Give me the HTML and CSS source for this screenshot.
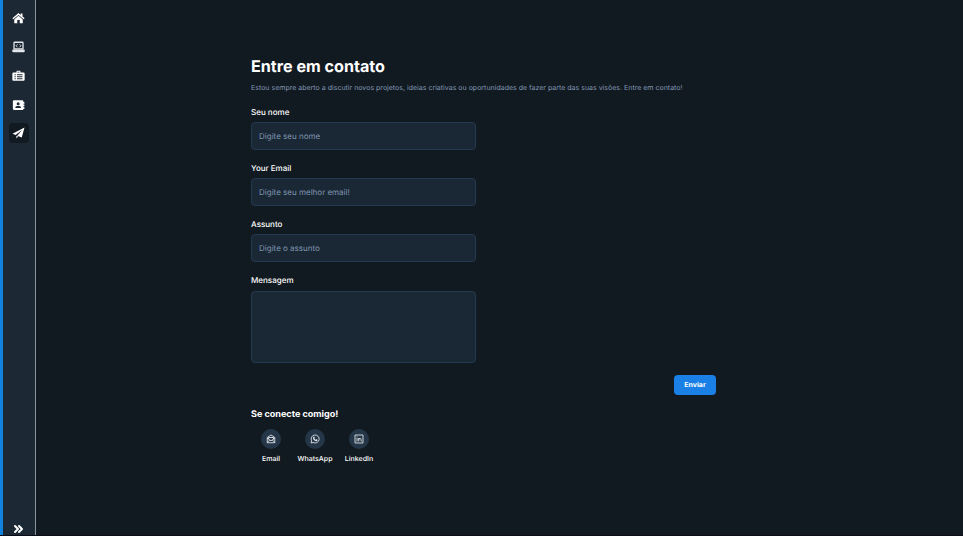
FILE: index.html
```html
<!DOCTYPE html>
<html lang="pt-BR">
<head>
<meta charset="utf-8">
<title>Entre em contato</title>
<link rel="stylesheet" href="styles.css">
</head>
<body>
<div class="app">
  <aside class="sidebar">
    <nav class="nav">
      <a class="nav-item"><svg width="13" height="12" viewBox="0 0 26 24"><path fill="#fff" d="M13 2 0.8 12.6l1.8 2L13 5.8l10.4 8.8 1.8-2-4.2-3.7V3h-3.5v2.9zM13 7.700 4.500 15v7.500h6V16h5v6.500h6V15z"/></svg></a>
      <a class="nav-item"><svg width="13" height="12" viewBox="0 0 26 24"><path fill="none" stroke="#e3e7ea" stroke-width="2.600" d="M4 16V4q0-1.500 1.500-1.500h15Q22 2.500 22 4v12z"/><path fill="#e3e7ea" d="M.5 17.500h25V20q0 2.500-2.500 2.500H3Q.5 22.500.5 20z"/><path fill="none" stroke="#e3e7ea" stroke-width="1.900" d="m11 6.500-3 3 3 3m4-6 3 3-3 3"/></svg></a>
      <a class="nav-item"><svg width="13" height="12" viewBox="0 0 26 24"><path fill="#fff" fill-rule="evenodd" d="M3 5h6V3q0-1.500 1.500-1.500h5Q17 1.500 17 3v2h6q2.300 0 2.300 2.300v12q0 2.300-2.300 2.300H3Q.7 21.600.7 19.300v-12Q.7 5 3 5zm8-1.700V5h4V3.300zM5 8.500v2h2.500v-2zm5 0v2h11v-2zm-5 4v2h2.500v-2zm5 0v2h11v-2zm-5 4v2h2.500v-2zm5 0v2h11v-2z"/></svg></a>
      <a class="nav-item"><svg width="13" height="12" viewBox="0 0 26 24"><path fill="#fff" fill-rule="evenodd" d="M4 2.500h16.500q2.300 0 2.300 2.300V6h2v3.500h-2v1.700h2v3.500h-2v1.700h2V20h-2q-.3 2-2.300 2H4q-2.300 0-2.300-2.300V4.800Q1.700 2.500 4 2.500zM12.300 6.500a3 3 0 1 0 0 6 3 3 0 0 0 0-6zM6.500 18h11.600q0-4-3.600-4h-4.400q-3.600 0-3.600 4z"/></svg></a>
      <a class="nav-item active"><svg width="13" height="12" viewBox="0 0 26 24"><path fill="#fff" d="M25 1 1 13.500l6.200 2.700L20 6l-9.500 11.500L19.500 21zM8.800 17.500V23l3.500-4.200z"/></svg></a>
    </nav>
    <svg class="expand" width="11" height="10" viewBox="0 0 22 20"><path fill="none" stroke="#fff" stroke-width="4" stroke-linecap="round" stroke-linejoin="round" d="m4 4 6 6-6 6m8-12 6 6-6 6"/></svg>
  </aside>
  <main class="content">
    <h1>Entre em contato</h1>
    <p class="intro">Estou sempre aberto a discutir novos projetos, ideias criativas ou oportunidades de fazer parte das suas visões. Entre em contato!</p>
    <form class="form">
      <label class="field"><span>Seu nome</span><input type="text" placeholder="Digite seu nome"></label>
      <label class="field"><span>Your Email</span><input type="text" placeholder="Digite seu melhor email!"></label>
      <label class="field"><span>Assunto</span><input type="text" placeholder="Digite o assunto"></label>
      <label class="field"><span>Mensagem</span><textarea></textarea></label>
      <button type="button">Enviar</button>
    </form>
    <h2>Se conecte comigo!</h2>
    <div class="socials">
      <a class="social"><span class="bubble"><svg width="10" height="10" viewBox="0 0 20 20" fill="none" stroke="#e8edf2" stroke-width="1.700" stroke-linejoin="round"><path d="M2.500 7 10 2l7.500 5v10.500h-15zM2.500 8.500 10 13.500l7.500-5M2.500 17 7.500 12m10 5-5-5M5 10V7h10v3"/></svg></span><span>Email</span></a>
      <a class="social"><span class="bubble"><svg width="10" height="10" viewBox="0 0 20 20"><path fill="none" stroke="#e8edf2" stroke-width="1.700" d="m2 18 1.200-4.300A8 8 0 1 1 6.300 16.900z"/><path fill="#e8edf2" d="M7.200 5.300 8.500 5.200l1 2.500-.9 1.300q1 1.700 2.700 2.500l1.200-1.200 2.500 1.200q0 2.500-2.200 2.900-3 .1-5.600-2.900Q4.500 7.500 7.200 5.300z"/></svg></span><span>WhatsApp</span></a>
      <a class="social"><span class="bubble"><svg width="10" height="10" viewBox="0 0 20 20"><path fill="none" stroke="#e8edf2" stroke-width="1.700" d="M2 2h16v16H2z"/><path fill="none" stroke="#e8edf2" stroke-width="1.700" d="M6 8v7M6 5v1.700M9.500 15V8m0 3.500q0-2.700 2.400-2.700T14.300 11.500V15"/></svg></span><span>LinkedIn</span></a>
    </div>
  </main>
</div>
</body>
</html>
```
FILE: styles.css
```css
* { box-sizing: border-box; }
body {
  margin: 0;
  background: #121a21;
  font-family: Inter, sans-serif;
  color: #fff;
  text-rendering: geometricPrecision;
}
.app {
  display: flex;
  height: 536px;
  border-bottom: 1px solid #0b0d16;
  overflow: hidden;
}
.sidebar {
  display: flex;
  flex-direction: column;
  justify-content: space-between;
  align-items: flex-start;
  width: 36px;
  height: 536px;
  padding: 8.300px 0 2.500px 5.600px;
  flex: none;
  background: #1c2834;
  border-left: 3px solid #1182df;
  border-right: 1px solid #8b949c;
}
.nav {
  display: flex;
  flex-direction: column;
  gap: 8.750px;
}
.nav-item {
  display: flex;
  align-items: center;
  justify-content: center;
  width: 20px;
  height: 20px;
  border-radius: 4px;
}
.nav-item.active { background: #121a21; }
.expand { margin-left: 4.500px; }
.content {
  width: 465px;
  margin-left: 215px;
  padding-top: 55px;
}
h1 {
  margin: 0;
  font-size: 16.150px;
  line-height: 22px;
  font-weight: 700;
}
.intro {
  margin: 5px 0 0;
  font-size: 7.030px;
  line-height: 11px;
  color: #8096b1;
  white-space: nowrap;
}
.form {
  display: flex;
  flex-direction: column;
  margin-top: 13px;
}
.field {
  display: flex;
  flex-direction: column;
  width: 225px;
  margin-bottom: 12px;
}
.field span {
  font-size: 8.030px;
  line-height: 12px;
  font-weight: 500;
  margin-bottom: 4.150px;
}
input, textarea {
  width: 225px;
  height: 28px;
  padding: 0 7px;
  border: 1px solid #243a50;
  border-radius: 4px;
  background: #1a2734;
  color: #fff;
  font: 8.030px Inter, sans-serif;
  text-rendering: geometricPrecision;
  outline: none;
}
input::placeholder { color: #8096b1; opacity: 1; }
textarea { height: 72px; resize: none; display: block; }
button {
  align-self: flex-end;
  width: 42px;
  height: 20px;
  padding: 0;
  border: 0;
  border-radius: 4px;
  background: #1b80e5;
  color: #fff;
  font: 700 7px Inter, sans-serif;
  text-rendering: geometricPrecision;
}
h2 {
  margin: 13.500px 0 0;
  font-size: 9.050px;
  line-height: 14px;
  font-weight: 700;
}
.socials {
  display: flex;
  margin: 7.300px 0 0 -2px;
}
.social {
  display: flex;
  flex-direction: column;
  align-items: center;
  gap: 5px;
  width: 44px;
  font-size: 7.020px;
  line-height: 10px;
  font-weight: 500;
}
.bubble {
  display: flex;
  align-items: center;
  justify-content: center;
  width: 20px;
  height: 20px;
  border-radius: 50%;
  background: #243647;
}
```
